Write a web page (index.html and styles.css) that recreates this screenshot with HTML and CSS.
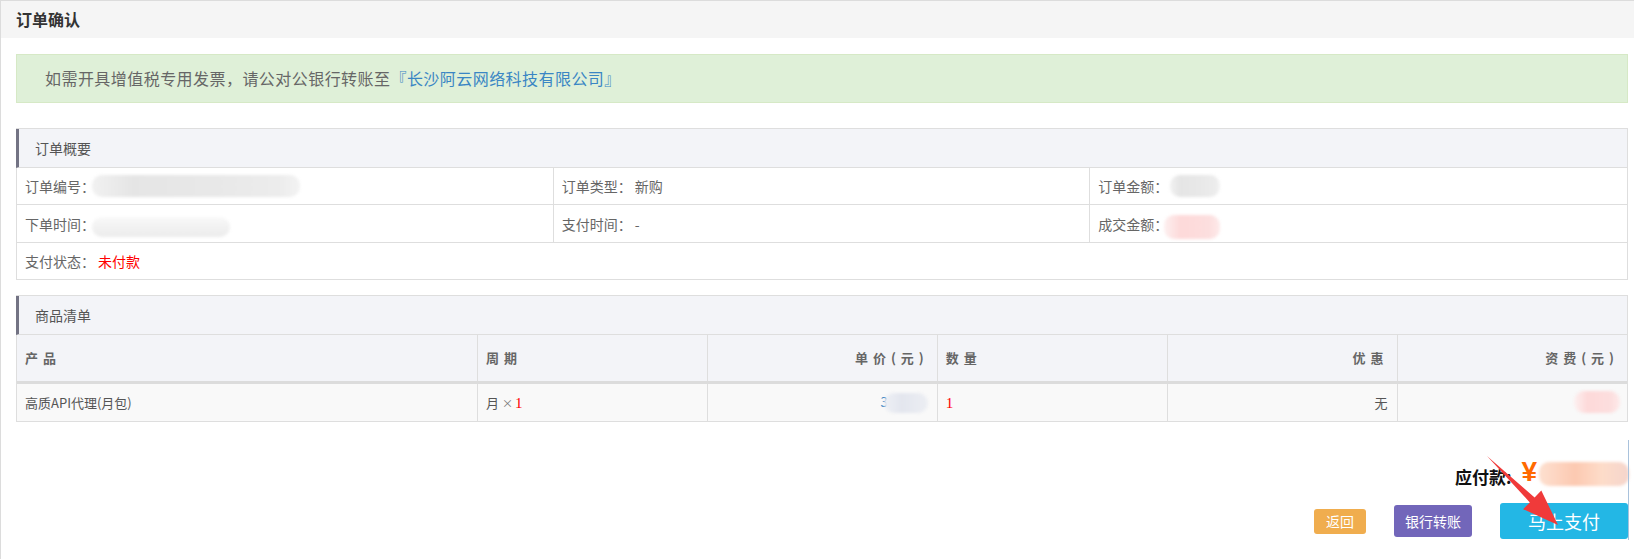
FILE: index.html
```html
<!DOCTYPE html>
<html lang="zh-CN">
<head>
<meta charset="utf-8">
<title>订单确认</title>
<link rel="stylesheet" href="styles.css">
</head>
<body>
<div class="page">
  <div class="page-header"><h1 class="page-title">订单确认</h1></div>
  <div class="content">
    <div class="alert">如需开具增值税专用发票，请公对公银行转账至<a class="alert-link">『长沙阿云网络科技有限公司』</a></div>

    <div class="panel">
      <div class="panel-heading">订单概要</div>
      <div class="summary">
        <div class="cell"><span class="label">订单编号：</span><span class="blur blur-gray blur-order"></span></div>
        <div class="cell"><span class="label">订单类型：</span><span class="value">新购</span></div>
        <div class="cell"><span class="label">订单金额：</span><span class="blur blur-gray blur-amount"></span></div>
        <div class="cell cell-tall"><span class="label">下单时间：</span><span class="blur blur-light blur-time"></span></div>
        <div class="cell cell-tall"><span class="label">支付时间：</span><span class="value">-</span></div>
        <div class="cell cell-tall"><span class="label">成交金额：</span><span class="blur blur-pink blur-deal"></span></div>
        <div class="cell cell-wide"><span class="label">支付状态：</span><span class="value value-red">未付款</span></div>
      </div>
    </div>

    <div class="panel panel-goods">
      <div class="panel-heading">商品清单</div>
      <table class="goods">
        <colgroup>
          <col class="col-wide"><col class="col-unit"><col class="col-unit"><col class="col-unit"><col class="col-unit"><col class="col-unit">
        </colgroup>
        <thead>
          <tr>
            <th>产品</th>
            <th>周期</th>
            <th class="right">单价(元)</th>
            <th>数量</th>
            <th class="right">优惠</th>
            <th class="right">资费(元)</th>
          </tr>
        </thead>
        <tbody>
          <tr>
            <td>高质API代理(月包)</td>
            <td>月<span class="times">×</span><span class="num-red">1</span></td>
            <td class="right"><span class="price-digit">3</span><span class="blur blur-blue blur-price"></span></td>
            <td><span class="num-red">1</span></td>
            <td class="right">无</td>
            <td class="right"><span class="blur blur-pink blur-fee"></span></td>
          </tr>
        </tbody>
      </table>
    </div>

    <div class="checkout">
      <div class="total">
        <span class="total-label">应付款:</span>
        <span class="yen">¥</span>
        <span class="blur blur-peach blur-total"></span>
      </div>
      <div class="actions">
        <button class="btn btn-back">返回</button>
        <button class="btn btn-bank">银行转账</button>
        <button class="btn btn-pay">马上支付</button>
      </div>
    </div>
  </div>

  <svg class="arrow" width="1634" height="559" viewBox="0 0 1634 559">
    <polygon points="1487,456 1534.6,497.4 1541.3,490.6 1558,525 1523.1,509.2 1529.8,502.4" fill="#f03a3a"/>
  </svg>
  <div class="edge-line"></div>
</div>
</body>
</html>
```

FILE: styles.css
```css
* { box-sizing: border-box; }

html, body {
  margin: 0;
  padding: 0;
  background: #fff;
}

body {
  font-family: "Noto Sans CJK SC", "Liberation Sans", sans-serif;
  font-size: 14px;
  color: #666;
}

.page {
  position: relative;
  width: 1634px;
  height: 559px;
  overflow: hidden;
  border-top: 1px solid #dcdcdc;
  border-left: 1px solid #dcdcdc;
}

.page-header {
  height: 37px;
  background: #f5f5f5;
  padding-left: 15px;
}

.page-title {
  margin: 0;
  font-size: 16px;
  font-weight: bold;
  line-height: 37px;
  color: #333;
}

.content {
  padding: 16px 6px 0 15px;
}

.alert {
  border: 1px solid #d6e9c6;
  background: #dff0d8;
  padding: 13px 28px;
  line-height: 21px;
  font-size: 16px;
  letter-spacing: 0.45px;
  color: #666;
  margin-bottom: 25px;
}

.alert-link {
  color: #3a86c4;
  text-decoration: none;
}

.panel {
  border: 1px solid #dedede;
}

.panel-goods {
  margin-top: 15px;
}

.panel-heading {
  height: 39px;
  margin-left: -1px;
  border-left: 3px solid #737384;
  border-bottom: 1px solid #dedede;
  background: #f3f4f8;
  padding-left: 16px;
  line-height: 38px;
  font-size: 14px;
  color: #555;
}

.summary {
  display: grid;
  grid-template-columns: repeat(3, 1fr);
}

.cell {
  height: 37px;
  display: flex;
  align-items: center;
  padding-left: 8px;
  border-bottom: 1px solid #dedede;
  border-right: 1px solid #dedede;
  font-size: 14px;
  color: #666;
}

.cell-tall { height: 38px; }

.cell:nth-child(3n) { border-right: none; }

.cell-wide {
  grid-column: 1 / span 3;
  border-right: none;
  border-bottom: none;
  height: 36px;
}

.label { width: 73px; flex: none; }

.value-red { color: #f00; }

.blur {
  display: inline-block;
  border-radius: 10px;
  filter: blur(1.5px);
}

.blur-gray { background: linear-gradient(90deg, #f1f1f1, #e5e5e5 20%, #e8e8e8 60%, #ececec 90%, #f3f3f3); }
.blur-light { background: linear-gradient(180deg, #f9f9f9, #f2f2f2 45%, #ececec); }
.blur-pink { background: linear-gradient(90deg, #fdf0f0, #fdd9d9 30%, #fcdede 80%, #fdeaea); }
.blur-blue { background: linear-gradient(90deg, #eef0f5, #e3e6ee 40%, #eceef3); }
.blur-peach { background: linear-gradient(90deg, #fde0d0, #fcc9b1 40%, #fddcc9 70%, #f5d5cc); }

.blur-order { width: 208px; height: 22px; margin-left: -6px; }
.blur-time { width: 138px; height: 20px; margin-left: -6px; margin-top: 6px; }
.blur-amount { width: 50px; height: 22px; margin-left: -1px; }
.blur-deal { width: 56px; height: 24px; margin-left: -7px; margin-top: 6px; }

.goods {
  width: 100%;
  border-collapse: collapse;
  table-layout: fixed;
}

.col-wide { width: 28.6%; }
.col-unit { width: 14.28%; }

.goods th {
  height: 47px;
  background: #f3f4f8;
  border-bottom: 3px solid #dcdcdc;
  padding: 0 8px;
  text-align: left;
  font-size: 13px;
  font-weight: bold;
  letter-spacing: 5px;
  color: #666;
}

.goods td {
  height: 39px;
  background: #f9f9f9;
  padding: 0 8px;
  text-align: left;
  font-size: 13px;
  color: #555;
}

.goods th + th, .goods td + td {
  border-left: 1px solid #dedede;
}

.goods .right { text-align: right; }

.goods td.right { padding-right: 9px; }

.times {
  font-size: 11px;
  color: #777;
  margin: 0 2px 0 3px;
}

.num-red {
  color: #f00;
  font-family: "Liberation Serif", serif;
  font-size: 15px;
}

.price-digit {
  color: #3a86c4;
  font-size: 13px;
  margin-right: -4px;
}

.blur-price { width: 44px; height: 20px; vertical-align: middle; margin-right: 0; }
.blur-fee { width: 46px; height: 22px; vertical-align: middle; margin-right: -2px; }

.checkout {
  display: flex;
  flex-direction: column;
  align-items: flex-end;
  margin-top: 35px;
}

.total {
  display: flex;
  align-items: center;
  height: 30px;
  margin-right: -1px;
}

.total-label {
  align-self: flex-end;
  font-size: 17px;
  line-height: 20px;
  font-weight: bold;
  color: #111;
}

.yen {
  font-family: "Liberation Sans", sans-serif;
  font-size: 28px;
  line-height: 28px;
  font-weight: bold;
  color: #ff6a00;
  margin-left: 10px;
}

.blur-total { width: 90px; height: 24px; margin-left: 2px; margin-top: 4px; }

.actions {
  display: flex;
  align-items: center;
  gap: 28px;
  margin-top: 16px;
}

.btn {
  border: none;
  border-radius: 3px;
  color: #fff;
  font-family: "Noto Sans CJK SC", "Liberation Sans", sans-serif;
  padding: 0;
  cursor: pointer;
}

.btn-back {
  width: 52px;
  height: 25px;
  background: #f0ad4e;
  font-size: 14px;
}

.btn-bank {
  width: 78px;
  height: 32px;
  background: #7266ba;
  font-size: 14px;
}

.btn-pay {
  width: 128px;
  height: 36px;
  background: #23b7e5;
  font-size: 18px;
}

.arrow {
  position: absolute;
  left: -1px;
  top: -1px;
  pointer-events: none;
}

.edge-line {
  position: absolute;
  left: 1627px;
  top: 439px;
  width: 1px;
  height: 100px;
  background: #a9c2dc;
}
```
